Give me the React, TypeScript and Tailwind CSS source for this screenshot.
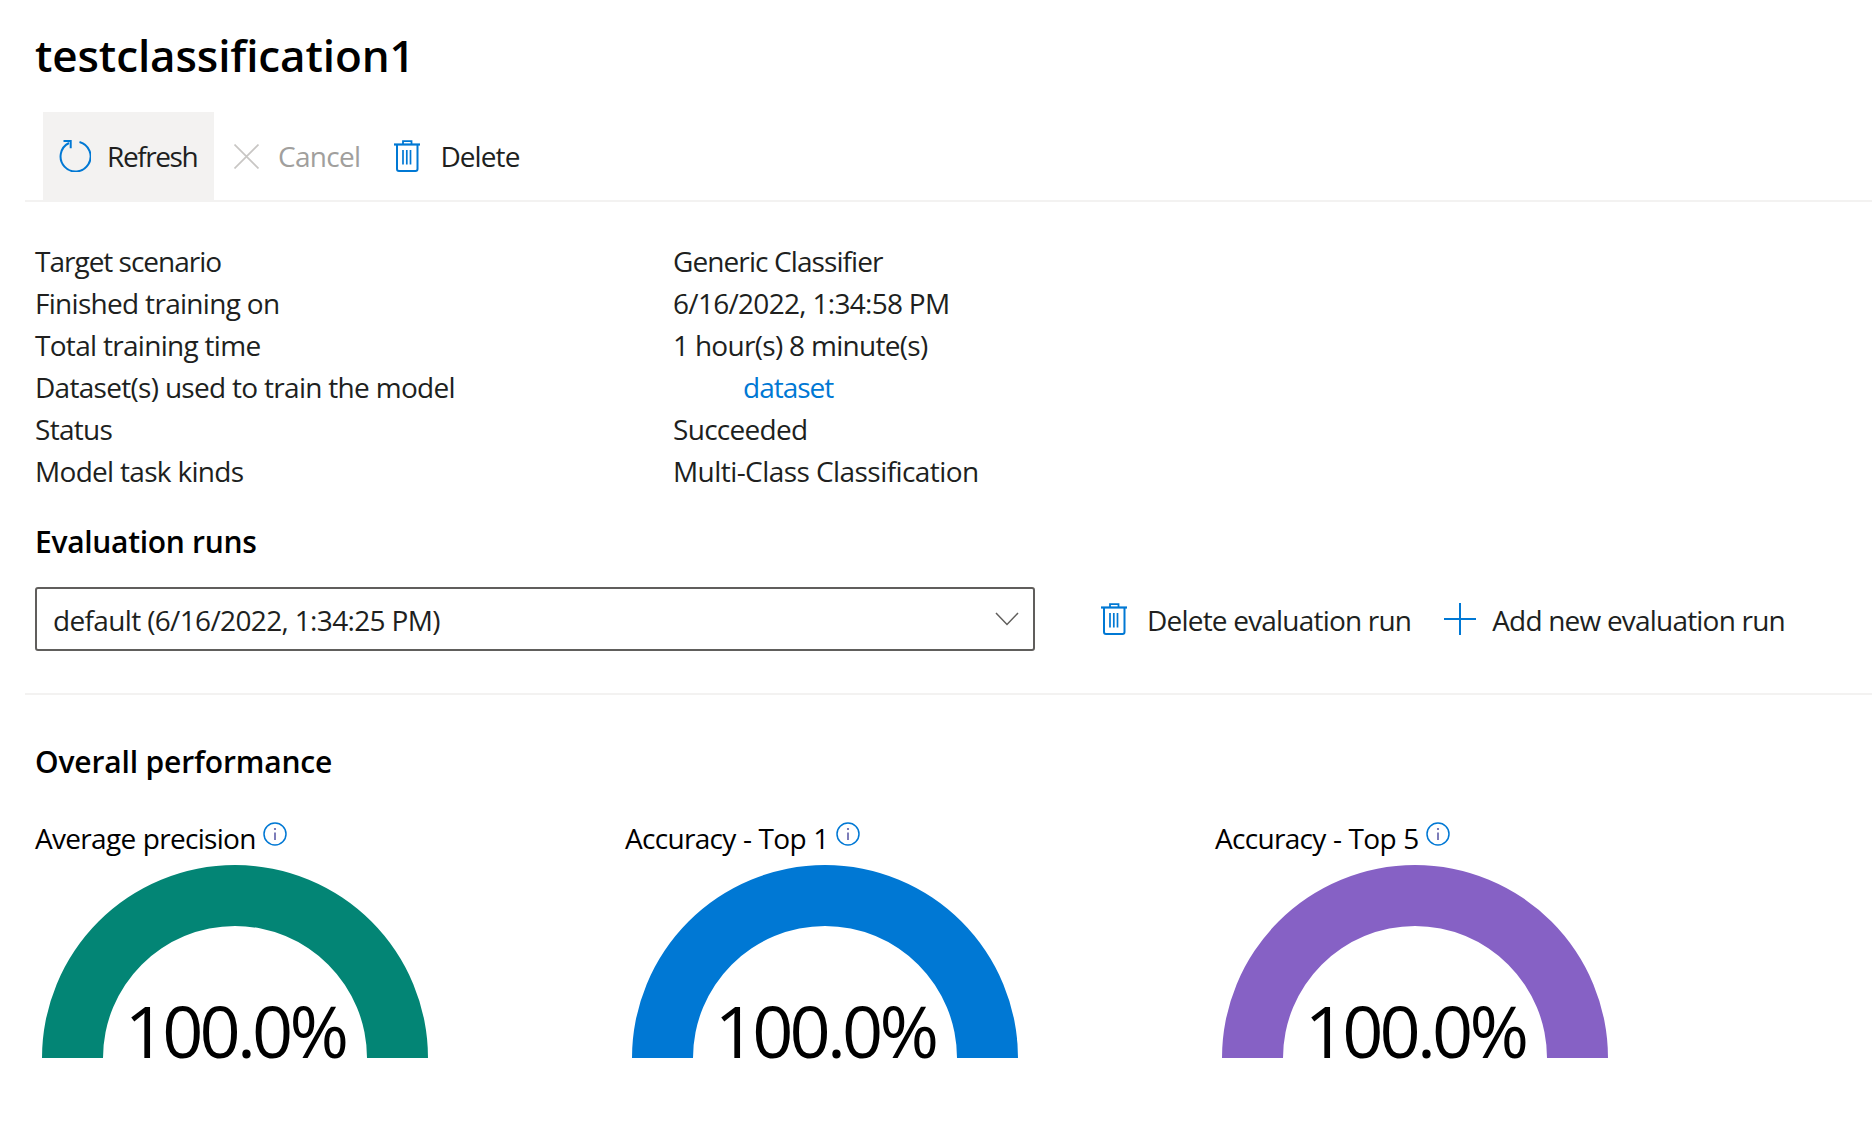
import React from 'react';

const TrashIcon = ({ className }: { className?: string }) => (
    <svg viewBox="0 0 26 32" className={className} fill="none" stroke="#0078d4">
        <path d="M0 4.5H26" strokeWidth="2.2" />
        <path d="M9 4V1.2H17.5V4" strokeWidth="1.8" />
        <path d="M3 5V29Q3 31 5 31H21.5Q23.5 31 23.5 29V5" strokeWidth="2" />
        <path d="M9 10V24.5M12.8 10V24.5M16.5 10V24.5" strokeWidth="1.7" />
    </svg>
);

const InfoIcon = () => (
    <svg viewBox="0 0 24 24" className="w-6 h-6 ml-[7px] -mt-[8px] shrink-0" fill="none">
        <circle cx="12" cy="12" r="11" stroke="#0078d4" strokeWidth="1.5" />
        <circle cx="12" cy="7" r="1.1" fill="#5c5ca8" />
        <path d="M12 10.5V18" stroke="#5c5ca8" strokeWidth="1.6" />
    </svg>
);

const details = [
    { name: 'Target scenario', value: 'Generic Classifier', nameClass: 'tracking-[-1px]', valueClass: 'tracking-[-0.9px]' },
    { name: 'Finished training on', value: '6/16/2022, 1:34:58 PM', nameClass: '', valueClass: '' },
    { name: 'Total training time', value: '1 hour(s) 8 minute(s)', nameClass: '', valueClass: '' },
    { name: 'Dataset(s) used to train the model', value: 'dataset', nameClass: '', valueClass: 'ml-[70px] text-[#0078d4] tracking-[-1px]' },
    { name: 'Status', value: 'Succeeded', nameClass: '', valueClass: '' },
    { name: 'Model task kinds', value: 'Multi-Class Classification', nameClass: '', valueClass: 'tracking-[-0.56px]' },
];

const Gauge = ({ label, color }: { label: string; color: string }) => (
    <div className="w-[590px]">
        <div className="flex items-center h-[42px] text-black">
            <span className="[word-spacing:0.8px]">{label}</span>
            <InfoIcon />
        </div>
        <div className="relative ml-[7px] mt-[6px] w-[386px] h-[193px]">
            <svg viewBox="0 0 386 193" className="w-full h-full">
                <path d="M0 193A193 193 0 0 1 386 193H325A132 132 0 0 0 61 193Z" fill={color} />
            </svg>
            <div className="absolute inset-x-0 bottom-[-21px] text-center text-[72px] leading-[98px] tracking-[-3.8px] text-black">
                100.0%
            </div>
        </div>
    </div>
);

const App: React.FC = () => {
    return (
        <div className="bg-white h-[1131px] overflow-hidden text-[28px] leading-[42px] tracking-[-0.7px] text-[#201f1e] font-['Open_Sans','Liberation_Sans',sans-serif]">
            <h1 className="h-[112px] pl-[35px] pt-[25px] text-[44px] leading-[60px] font-semibold tracking-[-0.1px] text-black">
                testclassification1
            </h1>

            <div className="ml-[25px] pl-[18px] h-[90px] border-b-2 border-[#f3f2f1] flex">
                <div className="w-[171px] h-[88px] bg-[#f3f2f1] flex items-center pl-[16px] gap-[16px]">
                    <svg viewBox="0 0 32 32" className="w-8 h-8 shrink-0" fill="none" stroke="#0078d4" strokeWidth="2">
                        <path d="M20.5 2A15 15 0 1 1 10 3" />
                        <path d="M4.5 1H11.7V8.3" strokeWidth="2" />
                    </svg>
                    <span className="tracking-[-1.4px]">Refresh</span>
                </div>
                <div className="flex items-center ml-[20px] text-[#a19f9d]">
                    <svg viewBox="0 0 24 24" className="w-[25px] h-[25px] shrink-0" fill="none" stroke="#c8c6c4" strokeWidth="1.6">
                        <path d="M0.5 0.5L23.5 23.5M23.5 0.5L0.5 23.5" />
                    </svg>
                    <span className="ml-[19px]">Cancel</span>
                </div>
                <div className="flex items-center ml-[34px]">
                    <TrashIcon className="w-[26px] h-8 shrink-0" />
                    <span className="ml-[20px] tracking-[-0.9px]">Delete</span>
                </div>
            </div>

            <div className="pl-[35px] pt-[38px]">
                {details.map((row) => (
                    <div key={row.name} className="flex h-[42px] text-[#201f1e]">
                        <div className={`w-[638px] ${row.nameClass}`}>{row.name}</div>
                        <div className={row.valueClass}>{row.value}</div>
                    </div>
                ))}
            </div>

            <h2 className="pl-[35px] mt-[29px] h-[42px] text-[30px] font-semibold tracking-[-0.3px] text-black">Evaluation runs</h2>

            <div className="pl-[35px] mt-[24px] pb-[42px] flex items-center">
                <div className="w-[1000px] h-[64px] border-2 border-[#605e5c] rounded-[3px] flex items-center justify-between pl-[16px] pr-[14px]">
                    <span className="pt-[2px] tracking-[-0.65px]">default (6/16/2022, 1:34:25 PM)</span>
                    <svg viewBox="0 0 24 14" className="w-6 h-[14px]" fill="none" stroke="#605e5c" strokeWidth="1.5">
                        <path d="M1 1L12 12.5L23 1" />
                    </svg>
                </div>
                <TrashIcon className="w-[26px] h-8 ml-[66px] shrink-0" />
                <span className="ml-[20px] pt-[2px] tracking-[-0.8px]">Delete evaluation run</span>
                <svg viewBox="0 0 32 32" className="w-8 h-8 ml-[33px] shrink-0" fill="none" stroke="#0078d4" strokeWidth="2">
                    <path d="M0 16H32M16 0V32" />
                </svg>
                <span className="ml-[16px] pt-[2px] tracking-[-0.8px]">Add new evaluation run</span>
            </div>

            <div className="ml-[25px] border-t-2 border-[#f3f2f1]"></div>

            <h2 className="pl-[35px] mt-[46px] h-[42px] text-[30px] font-semibold tracking-[-0.15px] text-black">Overall performance</h2>

            <div className="pl-[35px] mt-[34px] flex">
                <Gauge label="Average precision" color="#038575" />
                <Gauge label="Accuracy - Top 1" color="#0078d4" />
                <Gauge label="Accuracy - Top 5" color="#8661c5" />
            </div>
        </div>
    );
};

export default App;
